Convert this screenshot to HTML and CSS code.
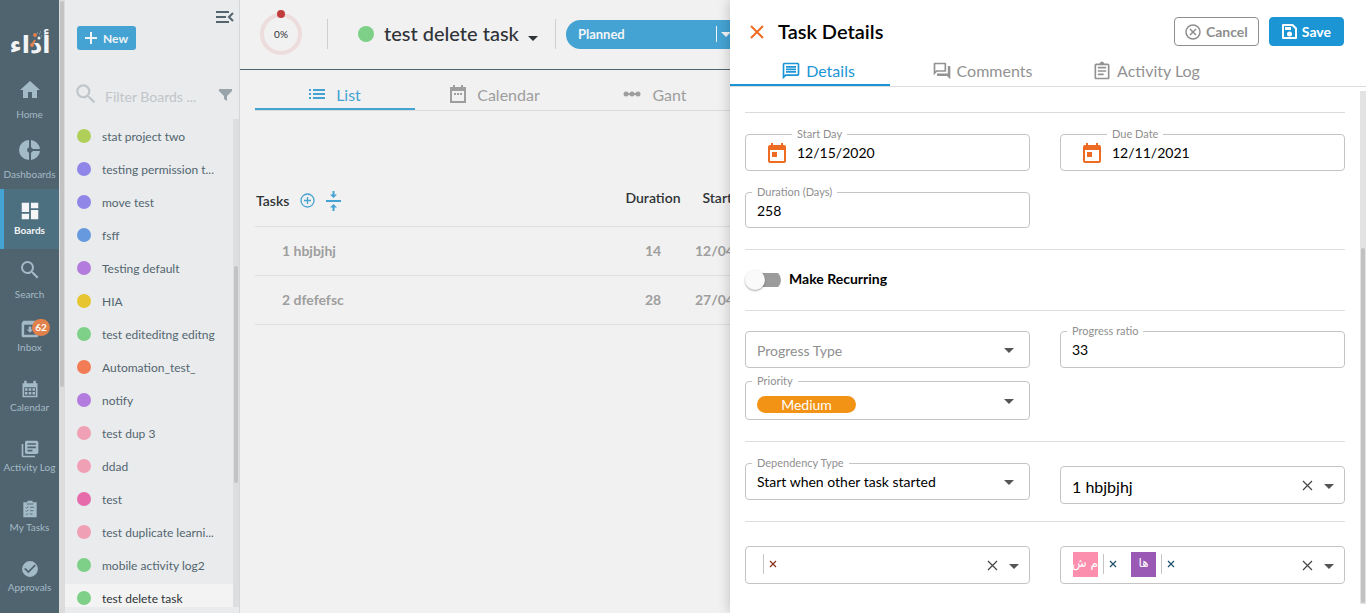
FILE: index.html
```html
<!DOCTYPE html>
<html lang="en">
<head>
<meta charset="utf-8">
<title>Boards - test delete task</title>
<meta name="viewport" content="width=device-width, initial-scale=1">
<link rel="stylesheet" href="styles.css">
</head>
<body>
<div class="app">
  <nav class="nav" aria-label="Main">
    <div class="logo" lang="ar">
      <svg width="44" height="36" viewBox="0 0 44 36" role="img" aria-label="أداء">
        <text x="22" y="31" text-anchor="middle" class="logo-text">أداء</text>
        <circle cx="27" cy="13" r="2" fill="#e2814b"/>
        <circle cx="31" cy="16" r="1.500" fill="#e9eef0"/>
        <path d="M29 11h1M31 12h1M33 14h1M32 10h1" stroke="#9fb4be"/>
        <path d="M24 23l3-5" stroke="#e2814b" stroke-width="2"/>
        <circle cx="24" cy="23" r="2" fill="#e2814b"/>
      </svg>
    </div>
    <a class="nav-item large" href="#home"><svg class="i24" viewBox="0 0 24 24"><path d="M10 20v-6h4v6h5v-8h3L12 3 2 12h3v8z"/></svg><span>Home</span></a>
    <a class="nav-item large" href="#dashboards"><svg class="i24" viewBox="0 0 24 24"><path d="M11 2v7.200A3 3 0 0 0 11 14.800V22A10 10 0 0 1 11 2zM13 2a10 10 0 0 1 9 9h-7.200A3 3 0 0 0 13 9.200zM14.800 13H22a10 10 0 0 1-9 9v-7.200A3 3 0 0 0 14.800 13z"/></svg><span>Dashboards</span></a>
    <a class="nav-item active" href="#boards" aria-current="page"><svg class="i22" viewBox="0 0 24 24"><path d="M3 13h8V3H3v10zm0 8h8v-6H3v6zm10 0h8V11h-8v10zm0-18v6h8V3h-8z"/></svg><span>Boards</span></a>
    <a class="nav-item large" href="#search"><svg class="i24" viewBox="0 0 24 24"><path d="M15.500 14h-.79l-.28-.27A6.470 6.470 0 0 0 16 9.500 6.500 6.500 0 1 0 9.500 16c1.610 0 3.090-.59 4.230-1.570l.27.28v.79l5 4.990L20.490 19l-4.990-5zm-6 0C7.010 14 5 11.990 5 9.500S7.010 5 9.500 5 14 7.010 14 9.500 11.990 14 9.500 14z"/></svg><span>Search</span></a>
    <a class="nav-item" href="#inbox"><svg class="i20" viewBox="0 0 24 24"><path fill-rule="evenodd" d="M4 2h16l2 3v15a2 2 0 0 1-2 2H4a2 2 0 0 1-2-2V5zM5 7v12h14V7zM10.500 9h3v3.500H16l-4 4-4-4h2.500z"/></svg><b class="badge">62</b><span>Inbox</span></a>
    <a class="nav-item" href="#calendar"><svg class="i20" viewBox="0 0 24 24"><path fill-rule="evenodd" d="M5 2h3v3h8V2h3v3h2v17H3V5h2zM5 10v10h14v-10zM6 11h3v3H6zm4.500 0h3v3h-3zm4.500 0h3v3h-3zM6 15.500h3v3H6zm4.500 0h3v3h-3zm4.500 0h3v3h-3z"/></svg><span>Calendar</span></a>
    <a class="nav-item" href="#activity"><svg class="i20" viewBox="0 0 24 24"><path d="M4 6H2v14c0 1.100.9 2 2 2h14v-2H4V6zm16-4H8c-1.100 0-2 .9-2 2v12c0 1.100.9 2 2 2h12c1.100 0 2-.9 2-2V4c0-1.100-.9-2-2-2zm-1 9H9V9h10v2zm-4 4H9v-2h6v2zm4-8H9V5h10v2z"/></svg><span>Activity Log</span></a>
    <a class="nav-item" href="#tasks"><svg class="i20" viewBox="0 0 24 24"><path d="M9 2h6v2h5v18H4V4h5z"/><path class="cut" d="M8 6h8M7 10l1 1 2-2M12 10h5M7 14l1 1 2-2M12 14h4M7 18l1 1 2-2M12 18h3"/></svg><span>My Tasks</span></a>
    <a class="nav-item" href="#approvals"><svg class="i20" viewBox="0 0 24 24"><path d="M12 2.500a9.500 9.500 0 1 0 0 19 9.500 9.500 0 0 0 0-19zm-2 14.500l-5-5 1.410-1.410L10 14.170l7.590-7.590L19 8l-9 9z"/></svg><span>Approvals</span></a>
  </nav>
  <div class="rail" aria-hidden="true"><div class="rail-thumb"></div></div>

  <aside class="boards">
    <div class="boards-top">
      <button class="new" type="button"><svg width="12" height="12" viewBox="0 0 12 12"><path d="M6 0v12M0 6h12" stroke="currentColor" stroke-width="2"/></svg>New</button>
      <button class="plain collapse" type="button" aria-label="Collapse boards"><svg width="18" height="14" viewBox="0 0 18 14" fill="none" stroke="currentColor" stroke-width="2"><path d="M0 2h13M0 7h10M0 12h13M17 3l-4 4 4 4"/></svg></button>
    </div>
    <div class="filter">
      <svg class="i26" viewBox="0 0 24 24"><path d="M15.500 14h-.79l-.28-.27A6.470 6.470 0 0 0 16 9.500 6.500 6.500 0 1 0 9.500 16c1.610 0 3.090-.59 4.230-1.570l.27.28v.79l5 4.990L20.490 19l-4.990-5zm-6 0C7.010 14 5 11.990 5 9.500S7.010 5 9.500 5 14 7.010 14 9.500 11.990 14 9.500 14z"/></svg>
      <input type="text" placeholder="Filter Boards ..." aria-label="Filter boards">
      <button class="plain funnel" type="button" aria-label="Filter options"><svg width="13" height="13" viewBox="0 0 13 13"><path d="M0 0h13v2L8 7v5l-3-2V7L0 2z" fill="currentColor"/></svg></button>
    </div>
    <div class="list-wrap">
      <ul class="list">
        <li><a href="#b1"><i class="lime"></i>stat project two</a></li>
        <li><a href="#b2"><i class="violet"></i>testing permission t...</a></li>
        <li><a href="#b3"><i class="violet"></i>move test</a></li>
        <li><a href="#b4"><i class="blue"></i>fsff</a></li>
        <li><a href="#b5"><i class="purple"></i>Testing default</a></li>
        <li><a href="#b6"><i class="yellow"></i>HIA</a></li>
        <li><a href="#b7"><i class="green"></i>test editeditng editng</a></li>
        <li><a href="#b8"><i class="orange"></i>Automation_test_</a></li>
        <li><a href="#b9"><i class="purple"></i>notify</a></li>
        <li><a href="#b10"><i class="pink"></i>test dup 3</a></li>
        <li><a href="#b11"><i class="pink"></i>ddad</a></li>
        <li><a href="#b12"><i class="magenta"></i>test</a></li>
        <li><a href="#b13"><i class="pink"></i>test duplicate learni...</a></li>
        <li><a href="#b14"><i class="green"></i>mobile activity log2</a></li>
        <li><a href="#b15" class="current"><i class="green"></i>test delete task</a></li>
      </ul>
      <div class="list-bar" aria-hidden="true"><div class="list-thumb"></div></div>
    </div>
  </aside>

  <main class="main">
    <header class="board-head">
      <div class="ring">
        <svg width="44" height="48" viewBox="0 0 44 48"><circle cx="22" cy="25" r="19" fill="none" stroke="#eddcdc" stroke-width="4"/><circle cx="22" cy="5" r="4" fill="#c23c3c"/></svg>
        <span>0%</span>
      </div>
      <div class="rule"></div>
      <h1><i class="green"></i><span>test delete task</span><svg width="10" height="5" viewBox="0 0 10 5"><path d="M0 0h10L5 5z" fill="currentColor"/></svg></h1>
      <div class="rule"></div>
      <button class="status" type="button"><span>Planned</span><svg width="10" height="5" viewBox="0 0 10 5"><path d="M0 0h10L5 5z" fill="currentColor"/></svg></button>
    </header>
    <div class="board-body">
      <div class="views">
        <button type="button" class="view on"><svg width="16" height="10" viewBox="0 0 16 10"><path d="M0 1h2M4 1h12M0 5h2M4 5h12M0 9h2M4 9h12" stroke="currentColor" stroke-width="2"/></svg>List</button>
        <button type="button" class="view"><svg width="16" height="18" viewBox="0 0 16 18" fill="none" stroke="currentColor"><path d="M1 3h14v14H1zM1 5h14" stroke-width="2"/><path d="M4 0v3M12 0v3" stroke-width="2"/><path d="M4 9h2M7 9h2M10 9h2" stroke-width="2"/></svg>Calendar</button>
        <button type="button" class="view"><svg width="18" height="6" viewBox="0 0 18 6" fill="currentColor"><circle cx="3" cy="3" r="2.500"/><circle cx="9" cy="3" r="2.500"/><circle cx="15" cy="3" r="2.500"/><path d="M2 2h14v2H2z"/></svg>Gant</button>
      </div>
      <table class="tasks">
        <colgroup><col class="c-name"><col class="c-num"><col class="c-date"><col></colgroup>
        <thead><tr>
          <th scope="col" class="name"><div class="tasks-title">Tasks
            <button class="plain" type="button" aria-label="Add task"><svg width="15" height="15" viewBox="0 0 15 15" fill="none" stroke="currentColor" stroke-width="1.300"><circle cx="7.500" cy="7.500" r="6.500"/><path d="M7.500 4v7M4 7.500h7"/></svg></button>
            <button class="plain" type="button" aria-label="Collapse tasks"><svg width="15" height="20" viewBox="0 0 15 20"><path d="M0 9h15v2H0zM6.500 0h2v3.500H11L7.500 7 4 3.500h2.500zM6.500 20h2v-3.500H11L7.500 13 4 16.500h2.500z" fill="currentColor"/></svg></button></div></th>
          <th scope="col">Duration</th><th scope="col">Start Date</th><td></td>
        </tr></thead>
        <tbody>
          <tr><td class="name">1 hbjbjhj</td><td>14</td><td>12/04/2021</td><td></td></tr>
          <tr><td class="name">2 dfefefsc</td><td>28</td><td>27/04/2021</td><td></td></tr>
        </tbody>
      </table>
    </div>
  </main>

  <section class="drawer" aria-label="Task Details">
    <header class="drawer-head">
      <button class="plain close" type="button" aria-label="Close"><svg width="14" height="14" viewBox="0 0 14 14"><path d="M1 1l12 12M13 1L1 13" stroke="currentColor" stroke-width="2"/></svg></button>
      <h2>Task Details</h2>
      <button class="btn cancel" type="button"><svg width="16" height="16" viewBox="0 0 16 16" fill="none" stroke="currentColor" stroke-width="1.500"><circle cx="8" cy="8" r="7"/><path d="M5 5l6 6M11 5l-6 6"/></svg>Cancel</button>
      <button class="btn save" type="button"><svg width="15" height="15" viewBox="0 0 15 15"><path fill="currentColor" fill-rule="evenodd" d="M1 0h10l4 4v10a1 1 0 0 1-1 1H1a1 1 0 0 1-1-1V1a1 1 0 0 1 1-1zM2 2v11h11V5l-3-3z"/><path fill="currentColor" d="M3 3h6v3H3z"/><circle cx="7.500" cy="10" r="2.500" fill="currentColor"/></svg>Save</button>
    </header>
    <div class="tabs">
      <button type="button" class="tab on"><svg class="i20" viewBox="0 0 24 24"><path d="M4 4h16v12H5.170L4 17.170V4m0-2c-1.100 0-1.990.9-1.990 2L2 22l4-4h14c1.100 0 2-.9 2-2V4c0-1.100-.9-2-2-2H4zm2 10h12v2H6v-2zm0-3h12v2H6V9zm0-3h12v2H6V6z"/></svg>Details</button>
      <button type="button" class="tab"><svg class="i20" viewBox="0 0 24 24"><path d="M15 4v7H5.170L4 12.170V4h11m1-2H3c-.55 0-1 .45-1 1v14l4-4h10c.55 0 1-.45 1-1V3c0-.55-.45-1-1-1zm5 4h-2v9H6v2c0 .55.45 1 1 1h11l4 4V7c0-.55-.45-1-1-1z"/></svg>Comments</button>
      <button type="button" class="tab"><svg class="i20" viewBox="0 0 24 24"><path d="M7 15h7v2H7zm0-4h10v2H7zm0-4h10v2H7zm12-4h-4.180C14.400 1.840 13.300 1 12 1c-1.300 0-2.400.84-2.820 2H5c-1.100 0-2 .9-2 2v15c0 1.100.9 2 2 2h14c1.100 0 2-.9 2-2V5c0-1.100-.9-2-2-2zm0 17H5V5h14v15z"/></svg>Activity Log</button>
    </div>
    <div class="drawer-body">
      <form class="form">
        <div class="group dates">
          <div class="field dated"><label for="start">Start Day</label><svg width="18" height="20" viewBox="0 0 18 20"><path fill="currentColor" fill-rule="evenodd" d="M3 0h2v2h8V0h2v2h1a2 2 0 0 1 2 2v14a2 2 0 0 1-2 2H2a2 2 0 0 1-2-2V4a2 2 0 0 1 2-2h1zM2 7v11h14V7zM4 9h5v5H4z"/></svg><input id="start" type="text" value="12/15/2020"></div>
          <div class="field dated"><label for="due">Due Date</label><svg width="18" height="20" viewBox="0 0 18 20"><path fill="currentColor" fill-rule="evenodd" d="M3 0h2v2h8V0h2v2h1a2 2 0 0 1 2 2v14a2 2 0 0 1-2 2H2a2 2 0 0 1-2-2V4a2 2 0 0 1 2-2h1zM2 7v11h14V7zM4 9h5v5H4z"/></svg><input id="due" type="text" value="12/11/2021"></div>
          <div class="field short"><label for="duration">Duration (Days)</label><input id="duration" type="text" value="258"></div>
        </div>
        <div class="group single">
          <label class="switch"><input type="checkbox" role="switch"><span>Make Recurring</span></label>
        </div>
        <div class="group progress">
          <div class="field"><select aria-label="Progress Type" class="empty"><option>Progress Type</option></select><svg class="caret" width="10" height="5" viewBox="0 0 10 5"><path d="M0 0h10L5 5z"/></svg></div>
          <div class="field"><label for="ratio">Progress ratio</label><input id="ratio" type="text" value="33"></div>
          <div class="field tall"><label for="priority">Priority</label><select id="priority" class="pill"><option>Medium</option></select><svg class="caret" width="10" height="5" viewBox="0 0 10 5"><path d="M0 0h10L5 5z"/></svg></div>
        </div>
        <div class="group depend">
          <div class="field"><label for="dep">Dependency Type</label><select id="dep"><option>Start when other task started</option></select><svg class="caret" width="10" height="5" viewBox="0 0 10 5"><path d="M0 0h10L5 5z"/></svg></div>
          <div class="field combo"><select aria-label="Other task" class="big"><option>1 hbjbjhj</option></select><button class="plain clear" type="button" aria-label="Clear"><svg width="9" height="9" viewBox="0 0 9 9"><path d="M0 0l9 9M9 0L0 9"/></svg></button><svg class="caret" width="10" height="5" viewBox="0 0 10 5"><path d="M0 0h10L5 5z"/></svg></div>
        </div>
        <div class="group people">
          <div class="field combo">
            <div class="chips"><span class="chip bare"><button class="plain red" type="button" aria-label="Remove"><svg width="6" height="6" viewBox="0 0 6 6"><path d="M0 0l6 6M6 0L0 6"/></svg></button></span></div>
            <button class="plain clear" type="button" aria-label="Clear"><svg width="9" height="9" viewBox="0 0 9 9"><path d="M0 0l9 9M9 0L0 9"/></svg></button><button class="plain" type="button" aria-label="Open"><svg class="caret" width="10" height="5" viewBox="0 0 10 5"><path d="M0 0h10L5 5z"/></svg></button>
          </div>
          <div class="field combo">
            <div class="chips">
              <span class="chip"><b class="av rose" lang="ar" dir="rtl">م ش</b><button class="plain teal" type="button" aria-label="Remove"><svg width="6" height="6" viewBox="0 0 6 6"><path d="M0 0l6 6M6 0L0 6"/></svg></button></span>
              <span class="chip"><b class="av plum" lang="ar" dir="rtl">ها</b><button class="plain teal" type="button" aria-label="Remove"><svg width="6" height="6" viewBox="0 0 6 6"><path d="M0 0l6 6M6 0L0 6"/></svg></button></span>
            </div>
            <button class="plain clear" type="button" aria-label="Clear"><svg width="9" height="9" viewBox="0 0 9 9"><path d="M0 0l9 9M9 0L0 9"/></svg></button><button class="plain" type="button" aria-label="Open"><svg class="caret" width="10" height="5" viewBox="0 0 10 5"><path d="M0 0h10L5 5z"/></svg></button>
          </div>
        </div>
      </form>
      <div class="body-bar" aria-hidden="true"><div class="body-thumb"></div></div>
    </div>
  </section>
</div>
</body>
</html>
```
FILE: styles.css
```css
* { box-sizing: border-box; }
body { margin: 0; font-family: Lato, "DejaVu Sans", sans-serif; font-size: 14px; color: #2f3337; background: #f1f1f1; }
button, input, select { font: inherit; color: inherit; }
button { cursor: pointer; }
a { color: inherit; text-decoration: none; }
svg { display: block; flex: none; }
i { display: block; flex: none; border-radius: 50%; }
.plain { display: flex; padding: 0; border: 0; background: none; }

.app { display: flex; height: 100vh; position: relative; overflow: hidden; }

.i20 { width: 20px; height: 20px; fill: currentColor; }
.i22 { width: 22px; height: 22px; fill: currentColor; }
.i24 { width: 24px; height: 24px; fill: currentColor; }
.i26 { width: 26px; height: 26px; fill: currentColor; }

.lime { background: #afcf59; }
.violet { background: #9086e8; }
.blue { background: #6699de; }
.purple { background: #b27bdd; }
.yellow { background: #e6c531; }
.green { background: #7ed088; }
.orange { background: #f27c55; }
.pink { background: #f0a0b4; }
.magenta { background: #e56bab; }

/* Main navigation */
.nav { flex: none; width: 59px; background: #50646f; color: #a3bac7; }
.logo { display: flex; justify-content: center; height: 69px; padding-top: 22px; }
.logo-text { font: bold 24px "DejaVu Sans", sans-serif; fill: #f1f3f4; }
.nav-item { position: relative; display: flex; flex-direction: column; align-items: center; gap: 2px; height: 60px; padding-top: 10px; font-size: 10px; line-height: 12px; white-space: nowrap; }
.nav-item.large { padding-top: 9px; gap: 6px; }
.nav-item.active { background: #4d7080; color: #f3f5f6; font-weight: bold; box-shadow: inset 4px 0 #45a3d3; padding-top: 11px; }
.cut { fill: none; stroke: #50646f; stroke-width: 1; }
.badge { position: absolute; top: 10px; left: 32px; min-width: 18px; height: 17px; border-radius: 9px; background: #e2814b; color: #fff; font-size: 10px; line-height: 17px; text-align: center; }
.rail { flex: none; width: 6px; background: #dcdcdc; }
.rail-thumb { height: 63%; margin: 1px; border-radius: 2px; background: #c3c3c3; }

/* Boards list */
.boards { flex: none; display: flex; flex-direction: column; width: 175px; border-right: 1px solid #d5d7d9; background: #e9ebed; color: #53656f; }
.boards-top { display: flex; justify-content: space-between; align-items: flex-start; padding: 10px 5px 0 12px; height: 78px; }
.new { display: flex; align-items: center; gap: 6px; height: 24px; margin-top: 16px; padding: 0 8px; border: 0; border-radius: 3px; background: #45a3d3; color: #eef4f7; font-size: 12px; font-weight: bold; }
.filter { display: flex; align-items: flex-start; gap: 4px; height: 41px; padding: 3px 7px 0 8px; color: #c0c5c9; }
.filter input { flex: 1; min-width: 0; height: 24px; margin-top: 3px; padding: 0 2px; border: 0; background: none; font-size: 14px; }
.filter input::placeholder { color: #c0c5c9; opacity: 1; }
.funnel { color: #98a4aa; margin-top: 8px; }
.list-wrap { flex: 1; min-height: 0; display: flex; margin-bottom: 6px; }
.list { flex: 1; min-width: 0; margin: 0; padding: 3px 0 0; list-style: none; overflow: hidden; display: flex; flex-direction: column; gap: 5px; font-size: 12px; }
.list a { display: flex; align-items: center; gap: 11px; height: 28px; padding-left: 12px; white-space: nowrap; }
.list i { width: 14px; height: 14px; }
.list .current { background: #f3f3f3; color: #2f3337; }
.list-bar { width: 6px; padding-top: 147px; background: #dcdedf; }
.list-thumb { width: 4px; height: 217px; margin: 0 auto; border-radius: 2px; background: #c2c3c4; }

/* Board */
.main { flex: 1; min-width: 0; background: #f1f1f1; }
.board-head { display: flex; align-items: center; height: 70px; padding-left: 19px; padding-bottom: 1px; border-bottom: 1px solid #50646f; }
.ring { display: grid; place-items: center; font-size: 10px; margin-bottom: 3px; }
.ring > * { grid-area: 1 / 1; }
.ring span { padding-top: 3px; }
.rule { width: 1px; height: 30px; background: #cfcfcf; margin-left: 24px; }
.board-head h1 { display: flex; align-items: center; margin: 0 0 0 30px; font-size: 20px; font-weight: 500; }
.board-head h1 i { width: 16px; height: 16px; margin-right: 10px; }
.board-head h1 span { padding-bottom: 2px; }
.board-head h1 svg { margin: 8px 0 0 9px; }
.board-head .rule + .status { margin-left: 10px; }
.board-head h1 + .rule { margin-left: 17px; }
.status { display: flex; align-items: center; width: 181px; height: 29px; padding: 0 12px; border: 0; border-radius: 15px; background: #45a3d3; color: #f1f5f7; font-size: 13px; font-weight: bold; }
.status span { flex: 0 0 139px; text-align: left; border-right: 1px solid #f1f5f7; margin-right: 4px; }
.board-body { padding-left: 15px; }
.views { display: flex; height: 41px; border-bottom: 1px solid #dadada; }
.view { display: flex; justify-content: center; align-items: center; gap: 11px; width: 160px; padding: 10px 0 0; border: 0; border-bottom: 2px solid transparent; background: none; color: #9e9e9e; font-size: 16px; }
.view.on { color: #45a3d3; border-bottom-color: #45a3d3; }
.tasks { width: 100%; margin-top: 65px; border-collapse: collapse; table-layout: fixed; font-size: 14px; font-weight: bold; color: #9e9e9e; }
.c-name { width: 358px; }
.c-num { width: 80px; }
.c-date { width: 82px; }
.tasks th, .tasks td { height: 49px; padding: 0; border-bottom: 1px solid #dedede; text-align: center; white-space: nowrap; }
.tasks th { height: 50px; padding-bottom: 6px; color: #2f3337; font-weight: 600; }
.tasks td.name { padding-left: 27px; text-align: left; }
.tasks-title { display: flex; align-items: center; gap: 11px; padding: 6px 0 0 1px; }
.tasks-title button { color: #45a3d3; }

/* Task drawer */
.drawer { position: absolute; top: 0; right: 0; bottom: 0; width: 636px; display: flex; flex-direction: column; background: #fff; color: #000; box-shadow: 0 0 12px rgba(0, 0, 0, .22); }
.drawer-head { display: flex; align-items: center; height: 57px; padding: 6px 22px 0 20px; }
.close { color: #ed6b22; }
.drawer-head h2 { flex: 1; margin: 0 0 0 14px; padding-bottom: 2px; font-size: 20px; font-weight: 600; }
.btn { display: flex; align-items: center; justify-content: center; gap: 5px; height: 29px; padding: 0 10px; border: 1px solid #8e8e8e; border-radius: 4px; background: #fff; color: #8e8e8e; font-size: 14px; font-weight: bold; }
.save { margin-left: 10px; padding: 0 12px; border-color: #1c95d5; background: #1c95d5; color: #fff; }
.tabs { display: flex; gap: 4px; height: 30px; border-bottom: 1px solid #dcdcdc; }
.tab { display: flex; align-items: center; justify-content: center; gap: 5px; width: 160px; padding: 0 0 0 16px; border: 0; border-bottom: 2px solid transparent; background: none; color: #929292; font-size: 16px; }
.tab.on { color: #1c95d5; border-bottom-color: #1c95d5; }
.drawer-body { flex: 1; min-height: 0; display: flex; }
.form { flex: 1; padding: 25px 15px 0; }
.body-bar { width: 6px; margin: 4px 0 9px; padding-top: 157px; background: #e3e3e3; }
.body-thumb { width: 4px; height: 355px; margin: 0 auto; border-radius: 2px; background: #c1c1c1; }
.group { display: grid; grid-template-columns: 1fr 1fr; align-items: start; column-gap: 30px; padding: 21px 0 20px; border-top: 1px solid #dcdcdc; }
.dates { row-gap: 21px; padding-bottom: 21px; }
.single { display: flex; align-items: center; height: 61px; padding: 0; }
.progress { row-gap: 13px; padding: 20px 0 21px; }
.depend { padding-bottom: 17px; }
.depend .combo { margin-top: 3px; }
.people { padding-top: 24px; }
.field { position: relative; display: flex; align-items: center; height: 37px; padding: 0 15px 0 11px; border: 1px solid #c4c4c4; border-radius: 4px; font-size: 14px; }
.field > label { position: absolute; top: -8px; left: 6px; padding: 0 5px; background: #fff; color: #8f8f8f; font-size: 11px; line-height: 14px; }
.field input, .field select { flex: 1; min-width: 0; height: 35px; padding: 0; border: 0; background: none; outline: 0; appearance: none; }
.field .empty { color: #8f8f8f; padding-top: 2px; }
.dated { padding-left: 22px; color: #000; }
.dated > label { left: 46px; }
.dated svg { color: #ed6b22; }
.dated input { margin-left: 11px; }
.short { height: 36px; }
.short input { height: 33px; }
.tall { height: 39px; }
.field .pill { flex: 0 0 99px; height: 17px; margin: 8px auto 0 0; border-radius: 9px; background: #f39315; color: #fff; text-align: center; text-align-last: center; line-height: 17px; }
.combo { height: 38px; padding-right: 10px; }
.field .big { font-size: 16px; padding-top: 3px; }
.caret { fill: #555; pointer-events: none; margin-top: 2px; }
.clear { margin-right: 12px; }
.clear svg, .chip svg { fill: none; stroke: #444; stroke-width: 1.2; overflow: visible; }
.chips { flex: 1; display: flex; gap: 12px; padding: 0 0 2px 1px; }
.chip { display: flex; align-items: center; height: 25px; }
.chip button { height: 20px; padding: 0 3px 0 6px; border-left: 1px solid #c4c4c4; align-items: center; margin-left: 5px; }
.chip .red svg { stroke: #8a2f1c; }
.chip .teal svg { stroke: #1d4f6b; }
.av { width: 25px; height: 25px; color: #fff; font: 12px/22px "DejaVu Sans", sans-serif; text-align: center; white-space: nowrap; }
.rose { background: #fc8fae; }
.plum { background: #9b59b6; }
.switch { display: flex; align-items: center; gap: 8px; font-size: 14px; font-weight: bold; color: #000; }
.switch span { padding-bottom: 3px; }
.switch input { appearance: none; display: flex; align-items: center; width: 36px; height: 20px; margin: 0; background: linear-gradient(#9c9c9c, #9c9c9c) right center / 26px 14px no-repeat; border-radius: 10px; }
.switch input::before { content: ""; width: 20px; height: 20px; border-radius: 50%; background: #fafafa; box-shadow: 0 1px 2px rgba(0, 0, 0, .35); }
```
